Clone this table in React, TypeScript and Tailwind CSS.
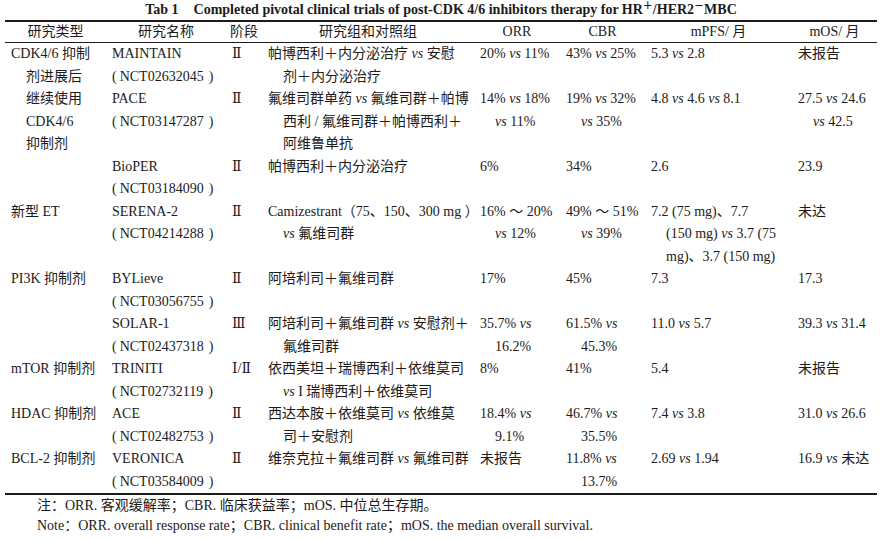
import React from "react";

type Row = {
  c1?: string[];
  span?: number;
  c2: string[];
  c3: string;
  c4: string[];
  c5: string[];
  c6: string[];
  c7: string[];
  c8: string[];
};

function rich(s: string, key: number) {
  const parts = s.split(/(vs)/);
  return (
    <React.Fragment key={key}>
      {parts.map((p, i) => {
        if (p === "vs") return <i key={i}>vs</i>;
        return <React.Fragment key={i}>{p}</React.Fragment>;
      })}
    </React.Fragment>
  );
}

function Lines({ lines, className = "" }: { lines: string[]; className?: string }) {
  return (
    <div className={"pl-[6px] whitespace-nowrap " + className}>
      {lines.map((l, i) => (
        <div key={i} className={i === 0 ? "" : "pl-[15px]"}>
          {rich(l, i)}
        </div>
      ))}
    </div>
  );
}

function Study({ name, nct }: { name: string; nct: string }) {
  return (
    <div className="pl-[6px] whitespace-nowrap">
      <div>{name}</div>
      <div>
        (<span className="ml-[3px] mr-[5px]">{nct}</span>)
      </div>
    </div>
  );
}

const rows: Row[] = [
  {
    c1: ["CDK4/6 抑制", "剂进展后", "继续使用", "CDK4/6", "抑制剂"],
    span: 3,
    c2: ["MAINTAIN", "NCT02632045"],
    c3: "Ⅱ",
    c4: ["帕博西利＋内分泌治疗 vs 安慰", "剂＋内分泌治疗"],
    c5: ["20% vs 11%"],
    c6: ["43% vs 25%"],
    c7: ["5.3 vs 2.8"],
    c8: ["未报告"],
  },
  {
    c2: ["PACE", "NCT03147287"],
    c3: "Ⅱ",
    c4: ["氟维司群单药 vs 氟维司群＋帕博", "西利 / 氟维司群＋帕博西利＋", "阿维鲁单抗"],
    c5: ["14% vs 18%", "vs 11%"],
    c6: ["19% vs 32%", "vs 35%"],
    c7: ["4.8 vs 4.6 vs 8.1"],
    c8: ["27.5 vs 24.6", "vs 42.5"],
  },
  {
    c2: ["BioPER", "NCT03184090"],
    c3: "Ⅱ",
    c4: ["帕博西利＋内分泌治疗"],
    c5: ["6%"],
    c6: ["34%"],
    c7: ["2.6"],
    c8: ["23.9"],
  },
  {
    c1: ["新型 ET"],
    c2: ["SERENA-2", "NCT04214288"],
    c3: "Ⅱ",
    c4: ["Camizestrant（75、150、300 mg ）", "vs 氟维司群"],
    c5: ["16% ～ 20%", "vs 12%"],
    c6: ["49% ～ 51%", "vs 39%"],
    c7: ["7.2 (75 mg)、7.7", "(150 mg) vs 3.7 (75", "mg)、3.7 (150 mg)"],
    c8: ["未达"],
  },
  {
    c1: ["PI3K 抑制剂"],
    span: 2,
    c2: ["BYLieve", "NCT03056755"],
    c3: "Ⅱ",
    c4: ["阿培利司＋氟维司群"],
    c5: ["17%"],
    c6: ["45%"],
    c7: ["7.3"],
    c8: ["17.3"],
  },
  {
    c2: ["SOLAR-1", "NCT02437318"],
    c3: "Ⅲ",
    c4: ["阿培利司＋氟维司群 vs 安慰剂＋", "氟维司群"],
    c5: ["35.7% vs", "16.2%"],
    c6: ["61.5% vs", "45.3%"],
    c7: ["11.0 vs 5.7"],
    c8: ["39.3 vs 31.4"],
  },
  {
    c1: ["mTOR 抑制剂"],
    c2: ["TRINITI", "NCT02732119"],
    c3: "Ⅰ/Ⅱ",
    c4: ["依西美坦＋瑞博西利＋依维莫司", "vs I 瑞博西利＋依维莫司"],
    c5: ["8%"],
    c6: ["41%"],
    c7: ["5.4"],
    c8: ["未报告"],
  },
  {
    c1: ["HDAC 抑制剂"],
    c2: ["ACE", "NCT02482753"],
    c3: "Ⅱ",
    c4: ["西达本胺＋依维莫司 vs 依维莫", "司＋安慰剂"],
    c5: ["18.4% vs", "9.1%"],
    c6: ["46.7% vs", "35.5%"],
    c7: ["7.4 vs 3.8"],
    c8: ["31.0 vs 26.6"],
  },
  {
    c1: ["BCL-2 抑制剂"],
    c2: ["VERONICA", "NCT03584009"],
    c3: "Ⅱ",
    c4: ["维奈克拉＋氟维司群 vs 氟维司群"],
    c5: ["未报告"],
    c6: ["11.8% vs", "13.7%"],
    c7: ["2.69 vs 1.94"],
    c8: ["16.9 vs 未达"],
  },
];

const cols = "grid grid-cols-[101px_120px_36px_212px_86px_85px_147px_85px]";

export default function App() {
  return (
    <div className="w-[882px] h-[540px] bg-white text-[#1c1a1a] font-['Liberation_Serif','DejaVu_Serif','Noto_Sans_CJK_SC',serif] text-[14px] overflow-hidden">
      <div className="h-[20px] flex items-center justify-center font-bold text-[14px] leading-[20px] whitespace-nowrap">
        <span>Tab 1</span>
        <span className="ml-[15px]">
          Completed pivotal clinical trials of post-CDK 4/6 inhibitors therapy for HR
          <sup className="text-[10px]">＋</sup>/HER2<sup className="text-[10px]">－</sup>MBC
        </span>
      </div>
      <div className="mx-[5px] border-t-2 border-b-2 border-[#1c1a1a]">
        <div className={cols + " h-[21px] border-b border-[#1c1a1a] leading-[20px] text-center"}>
          <div>研究类型</div>
          <div>研究名称</div>
          <div>阶段</div>
          <div>研究组和对照组</div>
          <div>ORR</div>
          <div>CBR</div>
          <div>mPFS/ 月</div>
          <div>mOS/ 月</div>
        </div>
        <div className={cols + " leading-[22.5px]"}>
          {rows.map((r, i) => (
            <React.Fragment key={i}>
              {r.c1 && (
                <Lines
                  lines={r.c1}
                  className={r.span === 3 ? "row-span-3" : r.span === 2 ? "row-span-2" : ""}
                />
              )}
              <Study name={r.c2[0]} nct={r.c2[1]} />
              <Lines lines={[r.c3]} />
              <Lines lines={r.c4} />
              <Lines lines={r.c5} />
              <Lines lines={r.c6} />
              <Lines lines={r.c7} />
              <Lines lines={r.c8} />
            </React.Fragment>
          ))}
        </div>
      </div>
      <div className="pl-[37px] pt-[1px] leading-[20px] whitespace-nowrap">
        <div>注：ORR. 客观缓解率；CBR. 临床获益率；mOS. 中位总生存期。</div>
        <div>Note：ORR. overall response rate；CBR. clinical benefit rate；mOS. the median overall survival.</div>
      </div>
    </div>
  );
}
